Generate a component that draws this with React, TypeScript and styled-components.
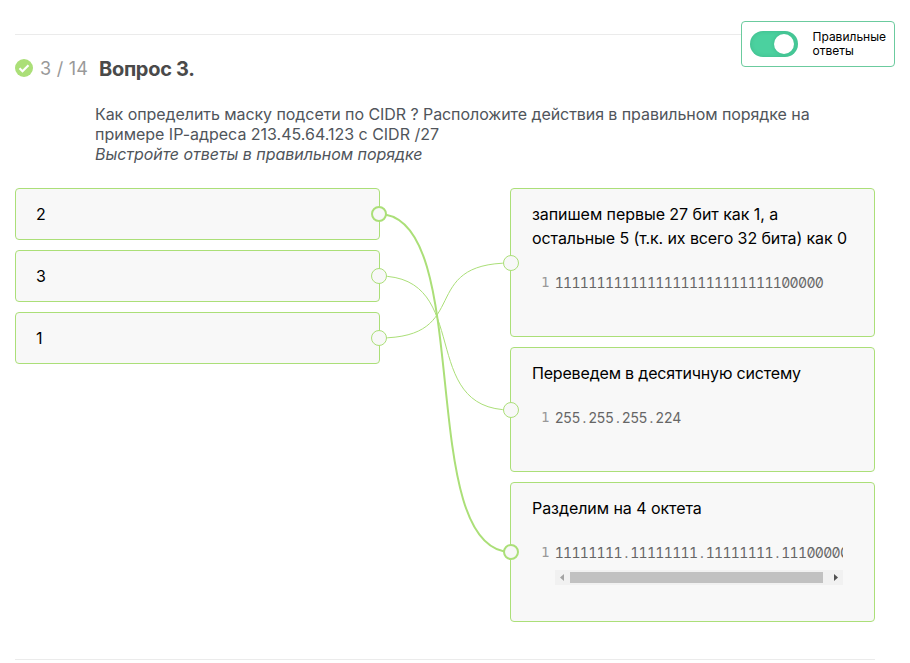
import React from "react";
import styled, { createGlobalStyle } from "styled-components";

const GREEN = "#abdf78";

const GlobalStyle = createGlobalStyle`
  * { box-sizing: border-box; }
  body {
    margin: 0;
    background: #fff;
    font-family: Inter, "Noto Sans", sans-serif;
    color: #000;
  }
`;

const Page = styled.main`
  position: relative;
  width: 910px;
  height: 663px;
  padding: 34px 35px 0 15px;
  overflow: hidden;
`;

const Question = styled.section`
  height: 626px;
  border-top: 1px solid #ebebeb;
  border-bottom: 1px solid #ebebeb;
`;

const Heading = styled.header`
  display: flex;
  align-items: center;
  height: 24px;
  margin-top: 21px;
`;

const CheckIcon = styled.svg`
  width: 18px;
  height: 18px;
  flex: none;
`;

const Counter = styled.span`
  width: 59px;
  margin-left: 7px;
  padding-top: 2px;
  font-size: 18px;
  line-height: 24px;
  letter-spacing: 0.25px;
  white-space: nowrap;
  color: #999;
`;

const Title = styled.h1`
  margin: 0;
  padding-top: 1px;
  font-size: 20px;
  line-height: 24px;
  font-weight: 700;
  letter-spacing: -0.3px;
  color: #4a4a4a;
`;

const Description = styled.div`
  margin: 24px 0 0 80px;
  font-size: 16px;
  line-height: 20px;
  color: #50555b;
`;

const Line = styled.div<{ $spacing: number }>`
  white-space: nowrap;
  letter-spacing: ${(p) => p.$spacing}px;
`;

const Hint = styled(Line)`
  font-style: italic;
`;

const Board = styled.div`
  position: relative;
  display: flex;
  justify-content: space-between;
  align-items: flex-start;
  width: 860px;
  margin-top: 24px;
`;

const Column = styled.div`
  display: flex;
  flex-direction: column;
  gap: 10px;
  width: 365px;
`;

const Card = styled.div<{ $height: number }>`
  position: relative;
  height: ${(p) => p.$height}px;
  padding: 13px 31px 0 21px;
  border: 1px solid ${GREEN};
  border-radius: 4px;
  background: #f8f8f8;
  font-size: 16px;
  line-height: 24px;
`;

const NumberCard = styled(Card)`
  padding-left: 20px;
`;

const Port = styled.span<{ $side: "left" | "right"; $top: number; $active?: boolean }>`
  position: absolute;
  z-index: 2;
  top: ${(p) => p.$top}px;
  ${(p) => (p.$side === "right" ? "right: -8px;" : "left: -8px;")}
  width: 16px;
  height: 16px;
  border: ${(p) => (p.$active ? 2 : 1)}px solid ${GREEN};
  border-radius: 50%;
  background: #f8f8f8;
`;

const Wires = styled.svg`
  position: absolute;
  z-index: 1;
  top: 0;
  left: 0;
  width: 860px;
  height: 434px;
  pointer-events: none;
`;

const CodeBlock = styled.div`
  display: flex;
  gap: 5px;
  margin-top: 20px;
  padding-left: 10px;
  font-size: 14px;
  line-height: 24px;
  color: #666;
`;

const LineNumber = styled.span`
  width: 8px;
  margin-left: -1px;
  margin-right: 1px;
  font-family: "DejaVu Sans Mono", monospace;
  font-size: 14px;
  color: #999;
`;

const CodeView = styled.div`
  flex: none;
  width: 288px;
  overflow: hidden;
`;

const CodeLine = styled.div`
  display: flex;
  height: 25px;
  padding-top: 1px;
  font-family: Inter, sans-serif;
  font-size: 14px;
  font-feature-settings: "zero" 1, "tnum" 1;
`;

const Glyph = styled.span`
  display: flex;
  flex: none;
  justify-content: center;
  width: 8.4px;
`;

const Scrollbar = styled.div`
  display: flex;
  align-items: center;
  height: 15px;
  margin-top: 5px;
  background: #f1f1f1;
`;

const ScrollThumb = styled.div`
  width: 253px;
  height: 11px;
  background: #c1c1c1;
`;

const ScrollArrow = styled.svg<{ $wide?: boolean }>`
  width: ${(p) => (p.$wide ? 20 : 15)}px;
  height: 15px;
  flex: none;
`;

const AnswerToggle = styled.label`
  position: absolute;
  z-index: 3;
  top: 21px;
  left: 741px;
  display: flex;
  align-items: center;
  width: 154px;
  height: 46px;
  padding-left: 8px;
  border: 1px solid #6bcb9e;
  border-radius: 4px;
  background: #fff;
`;

const Track = styled.span`
  display: flex;
  justify-content: flex-end;
  align-items: center;
  width: 48px;
  height: 26px;
  padding-right: 4px;
  border-radius: 13px;
  background: #4bd19f;
  box-shadow: inset 0 0 4px rgba(0, 80, 50, 0.18);
`;

const Knob = styled.span`
  width: 20px;
  height: 20px;
  border-radius: 50%;
  background: #fff;
  box-shadow: 0 0 4px rgba(0, 80, 50, 0.2);
`;

const ToggleText = styled.span`
  margin-left: 14.5px;
  font-family: Inter, sans-serif;
  font-size: 12px;
  line-height: 14px;
  white-space: nowrap;
`;

const Code = ({ text, scroll }: { text: string; scroll?: boolean }) => (
  <CodeBlock>
    <LineNumber>1</LineNumber>
    <CodeView>
      <CodeLine>
        {text.split("").map((c, i) => (
          <Glyph key={i}>{c}</Glyph>
        ))}
      </CodeLine>
      {scroll && (
        <Scrollbar>
          <ScrollArrow>
            <path d="M9 4v7L5 7.5z" fill="#a3a3a3" />
          </ScrollArrow>
          <ScrollThumb />
          <ScrollArrow $wide>
            <path d="M11 4v7l4-3.5z" fill="#505050" />
          </ScrollArrow>
        </Scrollbar>
      )}
    </CodeView>
  </CodeBlock>
);

export default function App() {
  return (
    <Page>
      <GlobalStyle />
      <Question>
        <Heading>
          <CheckIcon viewBox="0 0 18 18">
            <circle cx="9" cy="9" r="9" fill={GREEN} />
            <path d="M4.5 9.2l3 3 6-6" fill="none" stroke="#fff" strokeWidth="2.2" />
          </CheckIcon>
          <Counter>3 / 14</Counter>
          <Title>Вопрос 3.</Title>
        </Heading>
        <Description>
          <Line $spacing={-0.065}>Как определить маску подсети по CIDR ? Расположите действия в правильном порядке на</Line>
          <Line $spacing={-0.01}>примере IP-адреса 213.45.64.123 с CIDR /27</Line>
          <Hint $spacing={-0.04}>Выстройте ответы в правильном порядке</Hint>
        </Description>
        <Board>
          <Column>
            <NumberCard $height={52}>
              2<Port $side="right" $top={17} $active />
            </NumberCard>
            <NumberCard $height={52}>
              3<Port $side="right" $top={17} />
            </NumberCard>
            <NumberCard $height={52}>
              1<Port $side="right" $top={17} />
            </NumberCard>
          </Column>
          <Wires viewBox="0 0 860 434" fill="none" stroke={GREEN}>
            <path d="M364 26C461 26 399 364 496 364" strokeWidth="2" />
            <path d="M364 88C459 88 401 222 496 222" />
            <path d="M364 150C459 150 401 75 496 75" />
          </Wires>
          <Column>
            <Card $height={149}>
              <Line $spacing={-0.06}>запишем первые 27 бит как 1, а</Line>
              <Line $spacing={-0.1}>остальные 5 (т.к. их всего 32 бита) как 0</Line>
              <Code text="11111111111111111111111111100000" />
              <Port $side="left" $top={66} />
            </Card>
            <Card $height={125}>
              <Line $spacing={-0.18}>Переведем в десятичную систему</Line>
              <Code text="255.255.255.224" />
              <Port $side="left" $top={54} />
            </Card>
            <Card $height={140}>
              <Line $spacing={-0.06}>Разделим на 4 октета</Line>
              <Code text="11111111.11111111.11111111.11100000" scroll />
              <Port $side="left" $top={61} $active />
            </Card>
          </Column>
        </Board>
      </Question>
      <AnswerToggle>
        <Track>
          <Knob />
        </Track>
        <ToggleText>
          Правильные
          <br />
          ответы
        </ToggleText>
      </AnswerToggle>
    </Page>
  );
}
